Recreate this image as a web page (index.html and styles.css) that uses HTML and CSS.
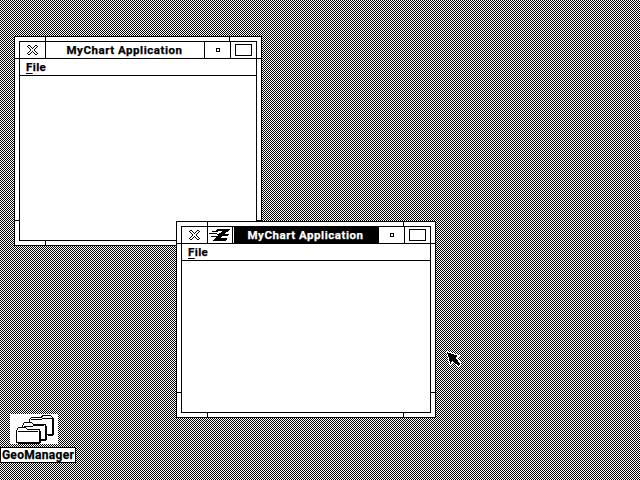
FILE: index.html
```html
<!DOCTYPE html>
<html lang="en">
<head>
<meta charset="utf-8">
<title>Desktop</title>
<link rel="stylesheet" href="styles.css">
</head>
<body>
<svg class="defs" width="0" height="0">
  <symbol id="close" viewBox="0 0 11 10"><path stroke="#000" d="M1 .5h2M8 .5h2M0 1.5h1M3 1.5h1M7 1.5h1M10 1.5h1M1 2.5h1M4 2.5h1M6 2.5h1M9 2.5h1M2 3.5h1M5 3.5h1M8 3.5h1M3 4.5h1M7 4.5h1M3 5.5h1M7 5.5h1M2 6.5h1M5 6.5h1M8 6.5h1M1 7.5h1M4 7.5h1M6 7.5h1M9 7.5h1M0 8.5h1M3 8.5h1M7 8.5h1M10 8.5h1M1 9.5h2M8 9.5h2"/></symbol>
</svg>
<main class="desktop">
  <svg class="dither" width="640" height="480"><defs><pattern id="checker" width="2" height="2" patternUnits="userSpaceOnUse"><path d="M0 0h1v1h-1zM1 1h1v1h-1z"/></pattern></defs><rect width="640" height="480" fill="url(#checker)"/></svg>
  <section class="window back">
    <i class="tick tl"></i><i class="tick tr"></i><i class="tick bl"></i><i class="tick br"></i>
    <i class="tick lt"></i><i class="tick rt"></i><i class="tick lb"></i><i class="tick rb"></i>
    <div class="frame">
      <header class="titlebar">
        <span class="close"><svg width="11" height="10"><use href="#close"/></svg></span>
        <h1 class="title"><span>MyChart Application</span></h1>
        <span class="minimize"><i></i></span>
        <span class="maximize"><i></i></span>
      </header>
      <nav class="menubar"><span class="menu"><u>F</u>ile</span></nav>
      <div class="content"></div>
    </div>
  </section>
  <section class="window front">
    <i class="tick tl"></i><i class="tick tr"></i><i class="tick bl"></i><i class="tick br"></i>
    <i class="tick lt"></i><i class="tick rt"></i><i class="tick lb"></i><i class="tick rb"></i>
    <div class="frame">
      <header class="titlebar">
        <span class="close"><svg width="11" height="10"><use href="#close"/></svg></span>
        <span class="express"><svg width="22" height="12"><path stroke="#000" d="M8 .5h13M7 1.5h13M3 2.5h6M13 2.5h6M12 3.5h5M0 4.5h8M10 4.5h6M8 5.5h12M9 6.5h10M2 7.5h11M7 8.5h5M6 9.5h12M5 10.5h13M4 11.5h13"/></svg></span>
        <h1 class="title"><span>MyChart Application</span></h1>
        <span class="minimize"><i></i></span>
        <span class="maximize"><i></i></span>
      </header>
      <nav class="menubar"><span class="menu"><u>F</u>ile</span></nav>
      <div class="content"></div>
    </div>
  </section>
  <div class="launcher">
    <svg class="folders" width="48" height="30"><g fill="#fff" stroke="#000">
      <path d="M19.5 20.5v-15l2-2h10l1-2h8l2 2v17z"/><path d="M21 5.500h10l2 -1h9" fill="none"/><path d="M43.500 4v17M42 20.5h1M38 21.5h5"/>
      <path d="M12.5 25.5v-14l2-3h7l2 2h12v15z"/><path d="M14 12.500h8l2-1h10" fill="none"/><path d="M36.500 12v14M31 26.5h5"/>
      <path d="M6.500 28.5v-12l2-3h7l2 2h12v13z"/><path d="M8 17.500h20" fill="none"/><path d="M30.500 17v12M8 29.5h22"/></g></svg>
    <span class="label">GeoManager</span>
  </div>
  <svg class="cursor" width="18" height="18"><path d="M1 1l11 4-2.500 2 5 6-2 2-6-5-2 3z"/></svg>
</main>
</body>
</html>
```
FILE: styles.css
```css
* { box-sizing: border-box; }
body { margin: 0; overflow: hidden; font: 700 11.5px Roboto, "Liberation Sans", sans-serif; color: #000; -webkit-text-stroke: .25px; }
svg { display: block; shape-rendering: crispEdges; }
.defs { position: absolute; }
.desktop { position: relative; width: 640px; height: 480px; overflow: hidden; background: #fff; }
.window { position: absolute; padding: 4px; background: #fff; border: 1px solid #000; }
.back { left: 14px; top: 36px; width: 248px; height: 210px; }
.front { left: 176px; top: 221px; width: 260px; height: 197px; }
.frame { display: flex; flex-direction: column; height: 100%; border: 1px solid #000; }
.tick { position: absolute; background: #000; }
.tl, .tr, .bl, .br { width: 1px; height: 4px; }
.lt, .rt, .lb, .rb { width: 4px; height: 1px; }
.tl, .tr { top: 0; }
.bl, .br { bottom: 0; }
.tl, .bl { left: 30px; }
.tr, .br { right: 31px; }
.lt, .lb { left: 0; }
.rt, .rb { right: 0; }
.lt, .rt { top: 21px; }
.lb, .rb { bottom: 24px; }
.titlebar { display: flex; flex: 0 0 17px; height: 17px; border-bottom: 1px solid #000; }
.titlebar > * { display: flex; align-items: center; justify-content: center; }
.close { width: 26px; border-right: 1px solid #000; }
.express { width: 25px; border-right: 1px solid #000; }
.title { flex: 1; margin: 0; font-size: 11.5px; letter-spacing: .54px; white-space: nowrap; }
.title span { margin-left: -1px; }
.front .title { margin-left: 1px; color: #fff; background: #000; }
.minimize { width: 27px; border-left: 1px solid #000; border-right: 1px solid #000; }
.minimize i { width: 4px; height: 4px; border: 1px solid #000; }
.maximize { width: 25px; }
.maximize i { width: 17px; height: 12px; border: 1px solid #000; }
.menubar { flex: 0 0 17px; height: 17px; padding-left: 6px; border-bottom: 1px solid #000; line-height: 16px; letter-spacing: .4px; }
.menu u { text-decoration: underline 1px; text-underline-offset: 1.5px; text-decoration-skip-ink: none; }
.content { flex: 1; }
.launcher { position: absolute; left: 0; top: 414px; width: 76px; }
.folders { margin-left: 10px; background: #fff; }
.label { display: block; height: 16px; margin-top: 3px; border: 1px solid #000; background: #fff; font-size: 12px; line-height: 15px; text-align: center; letter-spacing: .3px; }
.cursor { position: absolute; left: 446px; top: 351px; overflow: visible; }
.cursor path { fill: #000; stroke: #fff; stroke-width: 2px; paint-order: stroke; }
```
